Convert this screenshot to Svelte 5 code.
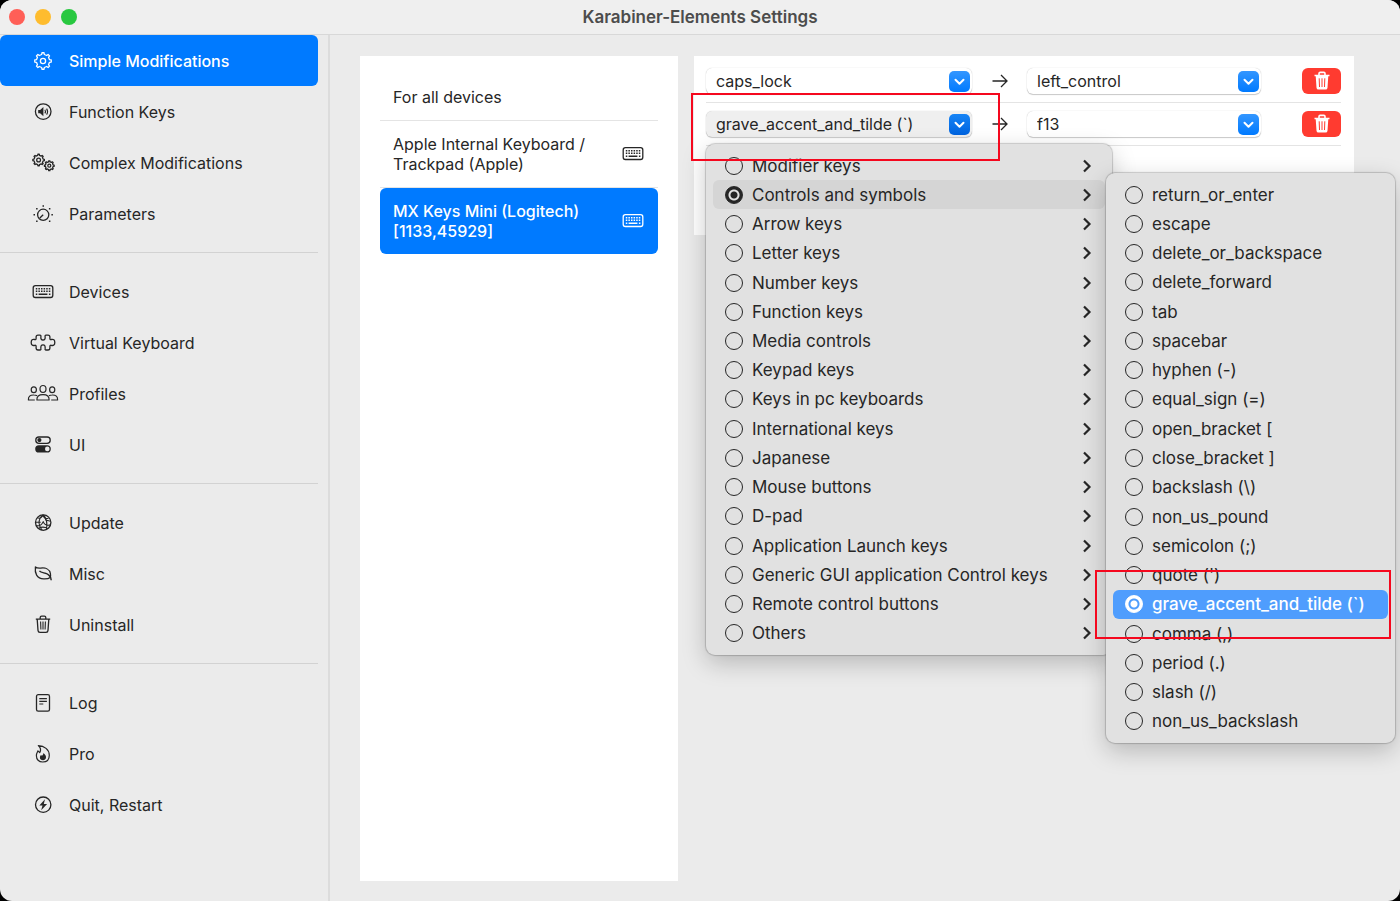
<script lang="ts">
  type Item = { icon: string; label: string };

  const navGroups: Item[][] = [
    [
      { icon: 'gear', label: 'Simple Modifications' },
      { icon: 'speaker', label: 'Function Keys' },
      { icon: 'gears', label: 'Complex Modifications' },
      { icon: 'dial', label: 'Parameters' },
    ],
    [
      { icon: 'keyboard', label: 'Devices' },
      { icon: 'puzzle', label: 'Virtual Keyboard' },
      { icon: 'people', label: 'Profiles' },
      { icon: 'switches', label: 'UI' },
    ],
    [
      { icon: 'globe', label: 'Update' },
      { icon: 'leaf', label: 'Misc' },
      { icon: 'trash', label: 'Uninstall' },
    ],
    [
      { icon: 'doc', label: 'Log' },
      { icon: 'flame', label: 'Pro' },
      { icon: 'bolt', label: 'Quit, Restart' },
    ],
  ];

  const devices = [
    { lines: ['For all devices'], keyboard: false },
    { lines: ['Apple Internal Keyboard /', 'Trackpad (Apple)'], keyboard: true },
    { lines: ['MX Keys Mini (Logitech)', '[1133,45929]'], keyboard: true },
  ];

  const categories = [
    'Modifier keys',
    'Controls and symbols',
    'Arrow keys',
    'Letter keys',
    'Number keys',
    'Function keys',
    'Media controls',
    'Keypad keys',
    'Keys in pc keyboards',
    'International keys',
    'Japanese',
    'Mouse buttons',
    'D-pad',
    'Application Launch keys',
    'Generic GUI application Control keys',
    'Remote control buttons',
    'Others',
  ];

  const keys = [
    'return_or_enter',
    'escape',
    'delete_or_backspace',
    'delete_forward',
    'tab',
    'spacebar',
    'hyphen (-)',
    'equal_sign (=)',
    'open_bracket [',
    'close_bracket ]',
    'backslash (\\)',
    'non_us_pound',
    'semicolon (;)',
    "quote (')",
    'grave_accent_and_tilde (`)',
    'comma (,)',
    'period (.)',
    'slash (/)',
    'non_us_backslash',
  ];

  const rows = [
    { from: 'caps_lock', to: 'left_control' },
    { from: 'grave_accent_and_tilde (`)', to: 'f13' },
  ];

  let page = $state('Simple Modifications');
  let device = $state(2);
  let category = $state('Controls and symbols');
  let key = $state('grave_accent_and_tilde (`)');
  let openRow = $state(1);

  // outline of a cog with eight rounded teeth
  function cog(cx: number, cy: number, r: number) {
    const inner = r * 0.8;
    const pts: string[] = [];
    for (let i = 0; i < 8; i++) {
      for (const [offset, radius] of [[-0.25, inner], [-0.16, r], [0.16, r], [0.25, inner]]) {
        const a = ((i + offset) * Math.PI) / 4;
        pts.push(`${(cx + radius * Math.sin(a)).toFixed(2)} ${(cy - radius * Math.cos(a)).toFixed(2)}`);
      }
    }
    return `M${pts.join('L')}Z`;
  }
</script>

{#snippet icon(name: string)}
  <svg class="icon" width="34" height="24" viewBox="0 0 34 24" aria-hidden="true">
    {#if name === 'gear'}
      <path d={cog(17, 12, 8.3)} />
      <circle cx="17" cy="12" r="2.6" />
    {:else if name === 'speaker'}
      <circle cx="17.2" cy="11.6" r="7.8" />
      <path class="solid" d="M12.2 9.900h1.900l3.300-2.900v9.200l-3.300-2.900h-1.900z" />
      <path d="M18.900 9.800q1.200 1.800 0 3.600M20.600 8.600q2 3 0 6" stroke-width="1.1" />
    {:else if name === 'gears'}
      <path d={cog(12.6, 9, 5.8)} />
      <circle cx="12.6" cy="9" r="1.9" />
      <path d={cog(23.3, 14.7, 4.9)} />
      <circle cx="23.3" cy="14.7" r="1.5" />
    {:else if name === 'dial'}
      <circle cx="17.2" cy="12.8" r="5.6" />
      <path d="M17.2 12.8l-3.4 3.2" />
      <path class="solid" d="M16.5 3.200h1.500v1.500h-1.500zM10.100 5.900h1.500v1.500h-1.500zM22.900 5.900h1.500v1.500h-1.500zM7.500 12.100h1.500v1.500H7.500zM25.400 12.100h1.500v1.500h-1.500zM10.100 18.400h1.500v1.500h-1.500zM22.900 18.400h1.500v1.500h-1.500z" />
    {:else if name === 'keyboard'}
      <rect x="7.2" y="5.700" width="19.6" height="11.8" rx="2.2" />
      <path d="M9.800 8.700h14.600M9.800 11.200h14.600" stroke-width="1.500" stroke-dasharray="1.500 1.100" />
      <path d="M9.800 14.200h1.500M12.600 14.200h8.800M22.900 14.200h1.500" stroke-width="1.500" />
    {:else if name === 'puzzle'}
      <path d="M10.100 6.100q0-1.900 1.900-1.900h2q1.200 0 .9 1.300-.5 3.500 2.100 3.500t2.100-3.500q-.3-1.300.9-1.300h2q1.900 0 1.900 1.900v1.500q0 1.100 1.200.9 3.700-1 3.700 2.900t-3.700 2.900q-1.200-.2-1.200.9v1.900q0 1.900-1.900 1.900h-2q-1.200 0-.9-1.300.5-3.900-2.100-3.900t-2.100 3.900q.3 1.300-.9 1.300h-2q-1.900 0-1.900-1.900v-1.900q0-1.100-1.200-.9-3.700 1-3.700-2.900t3.700-2.900q1.200.2 1.200-.9z" />
    {:else if name === 'people'}
      <g stroke-width="1.2">
        <ellipse cx="17" cy="6.900" rx="3" ry="3.400" />
        <path d="M10.900 18q-.4-5.300 6.100-5.300t6.100 5.300z" />
        <ellipse cx="7.800" cy="7.800" rx="2.600" ry="2.900" />
        <path d="M8.800 18H2.400q-.3-5.200 5.500-5 2 0 3.200.8" />
        <ellipse cx="26.200" cy="7.800" rx="2.600" ry="2.900" />
        <path d="M25.200 18h6.400q.3-5.200-5.500-5-2 0-3.200.8" />
      </g>
    {:else if name === 'switches'}
      <rect x="9.800" y="4" width="14.400" height="6.300" rx="3.100" />
      <circle class="solid" cx="13.400" cy="7.100" r="2.100" />
      <rect class="solid" x="9.200" y="12.200" width="15.600" height="7.400" rx="3.700" />
      <circle class="hole" cx="21.300" cy="15.900" r="2.300" />
    {:else if name === 'globe'}
      <circle cx="17.200" cy="11.600" r="7.700" />
      <path d="M9.500 11.300h5.200M11.500 6.800q3.200 1.500 5.500-2.600 1 4.500 5.500 3M17 4q-4.300 3-3.900 8.500.4 3.500 3 6.600M17.500 4q4.500 4.500 3 14.500M10 14.600q5 1 7.200-4 1.800 4.700 7.300 3.300M12.300 17.400q5-2.600 9.500.2M19 8.800l5.500 1.400" stroke-width="1.100" />
    {:else if name === 'leaf'}
      <path d="M9.400 4.900q2.100 1.600 5.200 1.200c5-.7 9 1.200 9.800 5.400q.4 2.100-.2 3.900-1.900 1.700-6.500 1.500C10.700 16.600 8.600 11.200 9.400 4.900z" />
      <path d="M13.400 8.900c2.200 2.700 7.600 1.200 10.100 5q1.700 1.400 1.700 4.400" stroke-width="1.500" />
    {:else if name === 'trash'}
      <path d="M9.800 6.200h14.400M11.200 6.200l.8 11.200q.1 1.900 2 1.900h6q1.900 0 2-1.900l.8-11.200M14.200 6V4.600q0-1.400 1.400-1.400h2.800q1.400 0 1.400 1.400V6" />
      <path d="M14.600 8.600l.3 8M17 8.600v8M19.400 8.600l-.3 8" stroke-width="1.100" />
    {:else if name === 'doc'}
      <rect x="10.500" y="3.700" width="13" height="16.400" rx="1.700" />
      <path d="M13.300 7.600h7.600M13.300 10.300h7.600M13.300 13h4" stroke-width="1.200" />
    {:else if name === 'flame'}
      <path d="M12.300 3.600c6 .2 11 4.100 11 9.600 0 4.300-2.700 6.800-6.600 6.800s-6.300-2.600-6.300-6.300c0-2.200.8-3.500 1.500-4.800l1.800 1.700c1.500-2.600.8-5.200-1.400-7z" stroke-width="1.200" />
      <path class="solid" d="M17.400 11c2 1.800 2.600 3 2.600 4.300 0 1.700-1.200 2.900-3 2.900s-3.100-1.100-3.100-2.800c0-1 .4-1.700 1.100-2.400l.9.700c1-.7 1.500-1.600 1.500-2.700z" />
    {:else if name === 'bolt'}
      <circle cx="17.200" cy="11.700" r="7.700" />
      <path class="solid" d="M19 6.300l-5.700 6.100h3.200l-1.300 4.900 5.900-6.200h-3.300z" />
    {/if}
  </svg>
{/snippet}

{#snippet popup(value: string, label: string)}
  <select aria-label={label}>
    <option>{value}</option>
  </select>
  <svg class="chevron" width="21" height="21" viewBox="0 0 21 21" aria-hidden="true">
    <path d="M6.500 8.800l4 4 4-4" />
  </svg>
{/snippet}

<div class="window">
  <header class="titlebar">
    <div class="lights">
      <button class="light close" aria-label="Close"></button>
      <button class="light minimize" aria-label="Minimize"></button>
      <button class="light zoom" aria-label="Zoom"></button>
    </div>
    <h1>Karabiner-Elements Settings</h1>
  </header>

  <div class="body">
    <aside class="sidebar">
      <nav>
        {#each navGroups as group, i}
          {#if i > 0}
            <hr />
          {/if}
          <div class="group">
            {#each group as item}
              <button class="nav-item" class:active={page === item.label} onclick={() => (page = item.label)}>
                {@render icon(item.icon)}
                <span>{item.label}</span>
              </button>
            {/each}
          </div>
        {/each}
      </nav>
    </aside>

    <main>
      <section class="devices">
        {#each devices as d, i}
          <button class="device" class:active={device === i} onclick={() => (device = i)}>
            <span class="device-name">
              {#each d.lines as line}
                <span>{line}</span>
              {/each}
            </span>
            {#if d.keyboard}
              {@render icon('keyboard')}
            {/if}
          </button>
        {/each}
      </section>

      <section class="mappings">
        {#each rows as row, i}
          <div class="mapping">
            <div class="popup from" class:open={openRow === i}>
              {@render popup(row.from, 'From key')}

              {#if openRow === i}
                <div class="menu categories">
                  {#each categories as name}
                    <label class="menu-item" class:current={category === name}>
                      <input type="radio" name="category" value={name} bind:group={category} />
                      <span>{name}</span>
                      <svg class="more" width="10" height="14" viewBox="0 0 10 14" aria-hidden="true">
                        <path d="M2 1.500l5.500 5.500L2 12.500" />
                      </svg>
                    </label>
                  {/each}
                </div>
                <div class="menu keys">
                  {#each keys as name}
                    <label class="menu-item" class:chosen={key === name}>
                      <input type="radio" name="key" value={name} bind:group={key} />
                      <span>{name}</span>
                    </label>
                  {/each}
                </div>
                <div class="mark mark-select"></div>
                <div class="mark mark-key"></div>
              {/if}
            </div>

            <svg class="arrow" width="16" height="14" viewBox="0 0 16 14" aria-hidden="true">
              <path d="M.5 7h14.500M9 1l6 6-6 6" />
            </svg>

            <div class="popup to">
              {@render popup(row.to, 'To key')}
            </div>

            <button class="delete" aria-label="Delete">
              <svg width="18" height="20" viewBox="0 0 18 20" aria-hidden="true">
                <path class="lid" d="M1.500 4.500h15M6 4V2.600q0-1.200 1.200-1.200h3.600q1.200 0 1.200 1.200V4" />
                <path class="can" d="M2.700 5h12.600l-.8 11.700q-.1 1.900-2 1.900h-7q-1.900 0-2-1.900z" />
                <path class="slots" d="M6.200 7.300l.3 8.700M9 7.300V16M11.800 7.300l-.3 8.700" />
              </svg>
            </button>
          </div>
        {/each}
      </section>
    </main>
  </div>
</div>

<style>
  :global(body) {
    background: #000;
  }

  .window {
    display: flex;
    flex-direction: column;
    min-height: 100vh;
    border-radius: 12px;
    overflow: hidden;
    background: #ebebeb;
    color: #262626;
    font-family: Inter, 'Liberation Sans', sans-serif;
    font-size: 16px;
    line-height: 20px;
  }

  button,
  select {
    margin: 0;
    padding: 0;
    border: none;
    background: none;
    color: inherit;
    font: inherit;
    text-align: left;
  }

  .titlebar {
    display: grid;
    grid-template-columns: 1fr auto 1fr;
    align-items: center;
    height: 34px;
    border-bottom: 1px solid #d8d8d8;
    background: #efefef;
  }

  .lights {
    display: flex;
    gap: 10px;
    padding-left: 9px;
  }

  .light {
    width: 16px;
    height: 16px;
    border-radius: 50%;
  }

  .close {
    background: #ff5f57;
  }

  .minimize {
    background: #febc2e;
  }

  .zoom {
    background: #28c840;
  }

  h1 {
    margin: 0;
    color: #4c4c4c;
    font-size: 17px;
    font-weight: 600;
  }

  .body {
    display: flex;
    flex: 1;
  }

  .sidebar {
    flex: 0 0 318px;
    padding-right: 10px;
    border-right: 2px solid #dcdcdc;
  }

  nav {
    display: flex;
    flex-direction: column;
    justify-content: space-between;
    min-height: 795px;
  }

  hr {
    width: 100%;
    margin: 0;
    border: none;
    border-top: 1px solid #d2d2d2;
  }

  .nav-item {
    display: flex;
    align-items: center;
    gap: 9px;
    width: 100%;
    height: 51px;
    padding-left: 26px;
    border-radius: 6px;
  }

  .active {
    background: #007aff;
    color: #fff;
    font-weight: 500;
  }

  .icon {
    flex: none;
    fill: none;
    stroke: currentColor;
    stroke-width: 1.3;
    stroke-linecap: butt;
    stroke-linejoin: round;
  }

  .icon .solid {
    fill: currentColor;
    stroke: none;
  }

  .icon .hole {
    fill: #ebebeb;
    stroke: none;
  }

  main {
    display: flex;
    flex: 1;
    align-items: flex-start;
    gap: 16px;
    padding: 21px 46px 20px 30px;
  }

  .devices {
    display: flex;
    flex: 0 0 278px;
    flex-direction: column;
    align-self: stretch;
    padding: 18px 20px;
    background: #fff;
  }

  .device {
    display: flex;
    align-items: center;
    justify-content: space-between;
    min-height: 44px;
    padding: 13px 8px 13px 13px;
    border-bottom: 1px solid #e4e4e4;
  }

  .device.active {
    border-bottom: none;
    border-radius: 6px;
  }

  .device-name {
    display: flex;
    flex-direction: column;
  }

  .mappings {
    flex: 1;
    min-height: 167px;
    padding: 4px 13px 8px 12px;
    background: #fff;
  }

  .mapping {
    display: flex;
    align-items: center;
    height: 42px;
    border-bottom: 1px solid #e4e4e4;
  }

  .popup {
    position: relative;
    display: grid;
    grid-template-columns: 1fr 23px;
    align-items: center;
    height: 26px;
    border-radius: 6px;
    background: #fff;
    box-shadow: 0 0 1px rgba(0, 0, 0, 0.25), 0 1px 1px rgba(0, 0, 0, 0.2);
  }

  .from {
    flex: 0 0 266px;
  }

  .to {
    flex: 0 0 234px;
  }

  .open {
    background: #efefef;
  }

  select {
    grid-column: 1 / -1;
    grid-row: 1;
    height: 26px;
    padding: 0 28px 0 10px;
    appearance: none;
  }

  .chevron {
    grid-column: 2;
    grid-row: 1;
    border-radius: 5px;
    background: linear-gradient(#3396ff, #007aff);
    fill: none;
    stroke: #fff;
    stroke-width: 2;
    stroke-linecap: round;
    stroke-linejoin: round;
    pointer-events: none;
  }

  .open .chevron {
    background: linear-gradient(#1583f5, #0064e0);
  }

  .arrow {
    flex: none;
    margin: 0 19px 0 20px;
    fill: none;
    stroke: #262626;
    stroke-width: 1.3;
  }

  .delete {
    display: grid;
    place-items: center;
    width: 39px;
    height: 26px;
    margin-left: auto;
    border-radius: 6px;
    background: #ff3b30;
  }

  .delete path {
    fill: none;
    stroke: #fff;
    stroke-width: 1.6;
  }

  .delete .can {
    fill: #fff;
    stroke: none;
  }

  .delete .slots {
    stroke: #ff3b30;
    stroke-width: 1;
  }

  .menu {
    position: absolute;
    z-index: 2;
    display: grid;
    grid-auto-rows: 1fr;
    box-sizing: border-box;
    padding: 7px;
    border-radius: 9px;
    background: #e1e1e1;
    box-shadow: 0 0 1px 1px rgba(0, 0, 0, 0.18), 0 8px 24px rgba(0, 0, 0, 0.22);
    font-size: 17px;
  }

  .categories {
    top: 33px;
    left: 0;
    width: 406px;
    height: 511px;
  }

  .keys {
    top: 62px;
    left: 400px;
    width: 289px;
    height: 570px;
  }

  .menu-item {
    display: flex;
    align-items: center;
    gap: 9px;
    padding: 0 13px 0 12px;
    border-radius: 6px;
    white-space: nowrap;
  }

  .current {
    background: #d5d5d5;
  }

  .chosen {
    background: #4f9dfd;
    color: #fff;
    font-weight: 500;
  }

  .menu-item input {
    flex: none;
    box-sizing: border-box;
    width: 18px;
    height: 18px;
    margin: 0;
    border: 1px solid currentColor;
    border-radius: 50%;
    appearance: none;
    color: inherit;
  }

  .menu-item input:checked {
    background: radial-gradient(circle, currentColor 3px, #e1e1e1 4px, #e1e1e1 5px, currentColor 6px);
  }

  .chosen input:checked {
    background: radial-gradient(circle, #fff 3px, #4f9dfd 4px, #4f9dfd 5px, #fff 6px);
  }

  .more {
    margin-left: auto;
    fill: none;
    stroke: #262626;
    stroke-width: 2.2;
  }

  .mark {
    position: absolute;
    z-index: 3;
    box-sizing: border-box;
    border: 2px solid #f5081e;
    pointer-events: none;
  }

  .mark-select {
    top: -18px;
    left: -15px;
    width: 309px;
    height: 68px;
  }

  .mark-key {
    top: 459px;
    left: 389px;
    width: 296px;
    height: 69px;
  }
</style>
